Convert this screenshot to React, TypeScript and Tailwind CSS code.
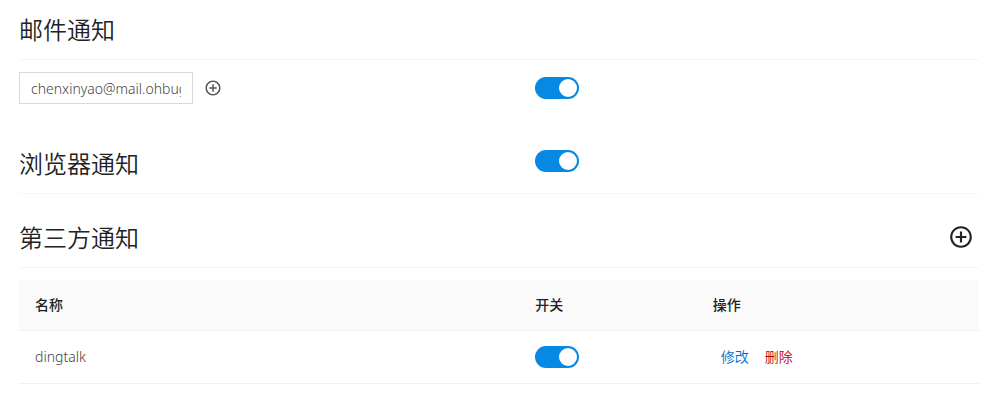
import { useState } from 'react';
import type { ReactNode } from 'react';
import { RiAddCircleLine } from 'react-icons/ri';

function Switch({ label }: { label: string }) {
  const [on, setOn] = useState(true);
  return (
    <input
      type="checkbox"
      role="switch"
      aria-label={label}
      checked={on}
      onChange={(e) => setOn(e.target.checked)}
      className="block h-[22px] w-11 cursor-pointer appearance-none rounded-full bg-black/25 p-[2px] transition-colors before:block before:size-[18px] before:rounded-full before:bg-white checked:bg-[#0589e2] checked:before:ml-auto"
    />
  );
}

function SectionHeader({ title, children }: { title: string; children?: ReactNode }) {
  return (
    <div className="grid grid-cols-[516fr_444fr] border-b border-[#f5f5f5] pt-4 pb-[15px]">
      <h2 className="text-2xl leading-7 font-[350] text-[#222]">{title}</h2>
      {children}
    </div>
  );
}

const channels = [{ name: 'dingtalk' }];

export default function App() {
  const [email, setEmail] = useState('chenxinyao@mail.ohbug.net');
  return (
    <main className="bg-white pr-[21px] pl-[19px] font-['Noto_Sans','Noto_Sans_CJK_SC',sans-serif] text-sm">
      <section className="mb-[30px]">
        <SectionHeader title="邮件通知" />
        <div className="grid grid-cols-[516fr_444fr] items-center pt-3">
          <div className="flex items-center gap-[11px]">
            <input
              type="email"
              aria-label="邮箱"
              value={email}
              onChange={(e) => setEmail(e.target.value)}
              className="h-8 w-[174px] border border-[#d9d9d9] px-[11px] text-sm font-light text-[#444] outline-none"
            />
            <button type="button" aria-label="添加邮箱" className="cursor-pointer text-[#555]">
              <RiAddCircleLine size={18} />
            </button>
          </div>
          <Switch label="邮件通知开关" />
        </div>
      </section>

      <section className="mb-[14px]">
        <SectionHeader title="浏览器通知">
          <Switch label="浏览器通知开关" />
        </SectionHeader>
      </section>

      <section>
        <SectionHeader title="第三方通知">
          <button type="button" aria-label="添加第三方通知" className="mr-[5px] h-[26px] cursor-pointer justify-self-end text-[#222]">
            <RiAddCircleLine size={26} />
          </button>
        </SectionHeader>
        <table className="mt-3 w-full table-fixed border-collapse text-left">
          <colgroup>
            <col className="w-[52.1%]" />
            <col className="w-[18.5%]" />
            <col />
          </colgroup>
          <thead className="bg-[#fafafa] text-[#222]">
            <tr className="h-[50px] border-b border-[#f0f0f0]">
              <th className="px-4 font-medium">名称</th>
              <th className="px-4 font-medium">开关</th>
              <th className="px-4 font-medium">操作</th>
            </tr>
          </thead>
          <tbody>
            {channels.map((c) => (
              <tr key={c.name} className="h-[53px] border-b border-[#f0f0f0]">
                <td className="px-4 font-light text-[#444]">{c.name}</td>
                <td className="px-4">
                  <Switch label={c.name + ' 开关'} />
                </td>
                <td className="px-4">
                  <div className="flex gap-4 px-2 font-[350]">
                    <button type="button" className="cursor-pointer text-[#0070cc]">修改</button>
                    <button type="button" className="cursor-pointer text-[#b8000f]">删除</button>
                  </div>
                </td>
              </tr>
            ))}
          </tbody>
        </table>
      </section>
    </main>
  );
}
